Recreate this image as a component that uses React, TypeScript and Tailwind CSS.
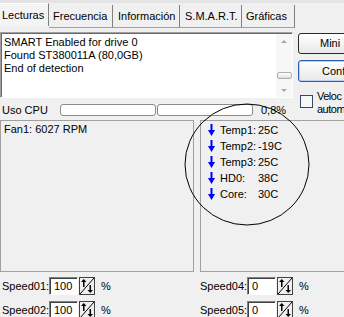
import type { ReactNode } from "react"

const tabs = [
	{ label: "Lecturas", width: "w-[49px] pl-[2px]", active: true },
	{ label: "Frecuencia", width: "w-[64px] pl-[4px]" },
	{ label: "Información", width: "w-[67px] pl-[5px]" },
	{ label: "S.M.A.R.T.", width: "w-[62px] pl-[5px]" },
	{ label: "Gráficas", width: "w-[53px] pl-[4px]" },
]

const temps = [
	{ label: "Temp1:", value: "25C" },
	{ label: "Temp2:", value: "-19C" },
	{ label: "Temp3:", value: "25C" },
	{ label: "HD0:", value: "38C" },
	{ label: "Core:", value: "30C" },
]

export default function App() {
	return (
		<div className="relative h-[317px] w-[344px] overflow-hidden bg-[#f0f0f0] font-['Liberation_Sans',Arial,sans-serif] text-[11px] leading-[13px] text-black">
			<div className="h-[3px] bg-[#e4e4e4]" />
			<TabStrip />
			<div className="mt-[6px] flex h-[88px]">
				<div className="flex w-[293px] shrink-0 flex-col">
					<Memo />
					<CpuRow />
				</div>
				<SideControls />
			</div>
			<div className="flex h-[152px] gap-[6px]">
				<div className="w-[194px] shrink-0 border border-[#a0a0a0] pt-[2px] pl-[3px]">Fan1: 6027 RPM</div>
				<div className="w-[150px] shrink-0 border border-[#a0a0a0] pt-[1px] pl-[7px]">
					{temps.map((t) => (
						<div key={t.label} className="flex h-[16px] items-center">
							<DownArrow />
							<span className="ml-[5px] w-[38px]">{t.label}</span>
							<span>{t.value}</span>
						</div>
					))}
				</div>
			</div>
			<div className="mt-[5px] grid grid-cols-[198px_1fr] gap-y-[6px] pl-[2px]">
				<SpeedRow label="Speed01:" value="100" />
				<SpeedRow label="Speed04:" value="0" />
				<SpeedRow label="Speed02:" value="100" />
				<SpeedRow label="Speed05:" value="0" />
			</div>
			<svg className="pointer-events-none absolute top-0 left-0" width="344" height="317">
				<ellipse cx="247" cy="164.5" rx="62" ry="60.5" fill="none" stroke="#000" strokeWidth="1" />
			</svg>
		</div>
	)
}

function TabStrip() {
	return (
		<div className="flex h-[23px]">
			{tabs.map((t) => (
				<div
					key={t.label}
					className={`${t.width} flex h-full shrink-0 items-center border-r border-r-[#808080] whitespace-nowrap ${
						t.active ? "border-t border-t-white bg-[#f4f4f4]" : "mt-[2px] h-[21px] border-b border-b-[#a0a0a0]"
					}`}
				>
					{t.label}
				</div>
			))}
		</div>
	)
}

function Memo() {
	return (
		<div className="flex h-[66px] border border-t-[#a0a0a0] border-r-white border-b-white border-l-[#a0a0a0] bg-white shadow-[inset_1px_1px_0_#696969]">
			<div className="flex-1 pt-[3px] pl-[3px] whitespace-nowrap">
				<div>SMART Enabled for drive 0</div>
				<div>Found ST380011A (80,0GB)</div>
				<div>End of detection</div>
			</div>
			<div className="mt-[1px] flex w-[16px] flex-col items-center bg-[#f7f7f7]">
				<Chevron up />
				<div className="mt-[24px] h-[7px] w-[15px] rounded-[2px] border border-[#b0b0b0] bg-gradient-to-b from-white to-[#e0e0e0]" />
				<div className="mt-[4px]">
					<Chevron />
				</div>
			</div>
		</div>
	)
}

function Chevron({ up }: { up?: boolean }) {
	return (
		<svg width="16" height="14" viewBox="0 0 16 14">
			<path d={up ? "M5 9 L8 6 L11 9 Z" : "M5 6 L8 9 L11 6 Z"} fill="#a8a8a8" />
		</svg>
	)
}

function CpuRow() {
	return (
		<div className="mt-[6px] flex h-[12px] items-center">
			<span className="w-[60px] pl-[2px]">Uso CPU</span>
			<div className="h-[12px] w-[96px] rounded-[3px] border border-[#8a8a8a] bg-white" />
			<div className="ml-[1px] h-[12px] w-[96px] rounded-[3px] border border-[#8a8a8a] bg-white" />
			<span className="ml-[8px]">0,8%</span>
		</div>
	)
}

function SideControls() {
	return (
		<div className="ml-[5px] flex w-[46px] shrink-0 flex-col whitespace-nowrap">
			<XpButton className="mt-[1px] h-[21px] pl-[21px] border-[#2a2a2a]">Mini</XpButton>
			<XpButton className="mt-[6px] h-[22px] pl-[23px] border-[#2f5fb0] shadow-[inset_0_0_0_1px_#b8cff2]">Conf</XpButton>
			<div className="mt-[8px] flex">
				<div className="mt-[5px] ml-[2px] h-[13px] w-[13px] shrink-0 border border-[#2c4a6e] bg-[#f6f6f6]" />
				<div className="ml-[4px] tracking-[-0.5px]">
					Veloc
					<br />
					autom
				</div>
			</div>
		</div>
	)
}

function XpButton({ className, children }: { className: string; children: ReactNode }) {
	return (
		<div className={`flex w-[60px] shrink-0 items-center rounded-[3px] border bg-gradient-to-b from-white to-[#e8e8e8] ${className}`}>
			{children}
		</div>
	)
}

function DownArrow() {
	return (
		<svg width="7" height="12" viewBox="0 0 7 12">
			<rect x="2.5" y="0" width="2" height="7" fill="#0000ff" />
			<path d="M0 6 L7 6 L3.5 12 Z" fill="#0000ff" />
		</svg>
	)
}

function SpeedRow({ label, value }: { label: string; value: string }) {
	return (
		<div className="flex h-[18px] items-center">
			<span className="w-[47px]">{label}</span>
			<div className="flex h-[18px] w-[29px] items-center border border-t-[#808080] border-r-white border-b-white border-l-[#808080] bg-white pl-[4px] shadow-[inset_1px_1px_0_#404040]">
				{value}
			</div>
			<Spinner />
			<span className="ml-[6px]">%</span>
		</div>
	)
}

function Spinner() {
	return (
		<svg className="ml-[1px]" width="16" height="18" viewBox="0 0 16 18">
			<rect x="0.5" y="0.5" width="15" height="17" fill="#f0f0f0" stroke="#404040" />
			<path d="M1 17 L15 1" stroke="#000" strokeWidth="1" />
			<rect x="4" y="4" width="1.5" height="6" fill="#000" />
			<path d="M2 5 L7.5 5 L4.75 2 Z" fill="#000" />
			<rect x="10.5" y="8" width="1.5" height="6" fill="#000" />
			<path d="M8.5 13 L14 13 L11.25 16 Z" fill="#000" />
		</svg>
	)
}
